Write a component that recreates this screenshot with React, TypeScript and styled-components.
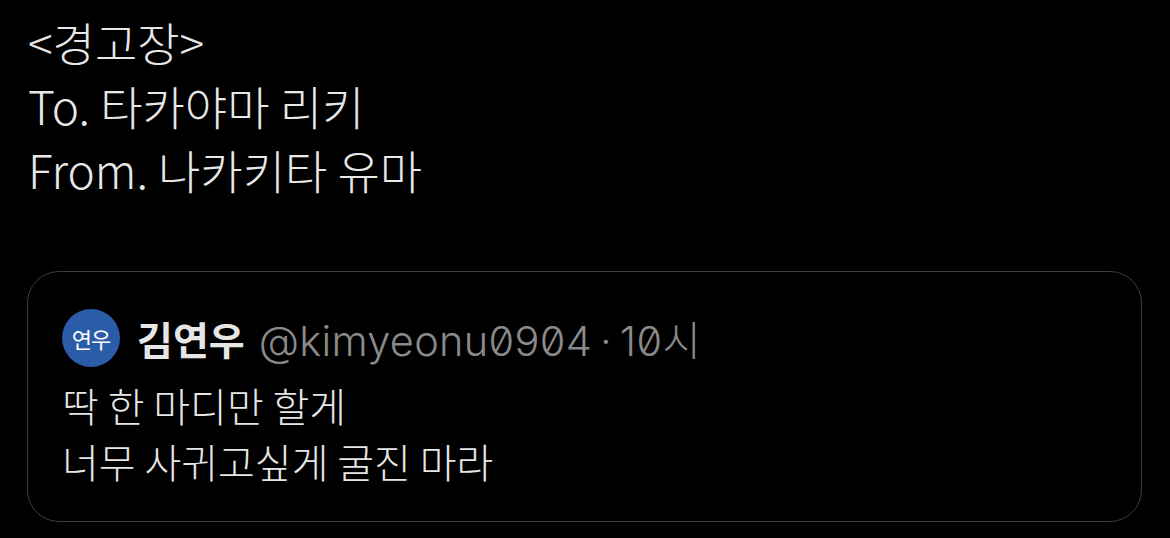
import styled, { createGlobalStyle } from 'styled-components';

const GlobalStyle = createGlobalStyle`
  html, body {
    margin: 0;
    padding: 0;
    background: #000000;
  }
  body {
    font-family: 'Noto Sans CJK KR', 'Noto Sans', sans-serif;
    -webkit-font-smoothing: antialiased;
  }
`;

const App = () => {
  return (
    <Page>
      <GlobalStyle />
      <Letter>
        <Line>&lt;경고장&gt;</Line>
        <Line>To. 타카야마 리키</Line>
        <Line>From. 나카키타 유마</Line>
      </Letter>
      <QuoteCard>
        <Header>
          <Avatar>연우</Avatar>
          <Name>김연우</Name>
          <Meta>@kimyeonu0904{'\u2009·\u2009'}10시</Meta>
        </Header>
        <Body>
          <BodyLine>딱 한 마디만 할게</BodyLine>
          <BodyLine>너무 사귀고싶게 굴진 마라</BodyLine>
        </Body>
      </QuoteCard>
    </Page>
  );
};

const Page = styled.div`
  width: 1170px;
  height: 538px;
  box-sizing: border-box;
  padding: 9px 28px 0 27px;
  background: #000000;
  overflow: hidden;
`;
const Letter = styled.div`
  display: flex;
  flex-direction: column;
  padding-left: 1px;
  margin-bottom: 70px;
`;
const Line = styled.div`
  font-family: 'Noto Sans CJK KR', sans-serif;
  font-size: 46px;
  font-weight: 300;
  line-height: 64px;
  color: #e8e8e8;
`;
const QuoteCard = styled.div`
  width: 1115px;
  height: 251px;
  box-sizing: border-box;
  border: 1px solid #3c3c3c;
  border-radius: 32px;
  padding: 37px 32px 0 34px;
`;
const Header = styled.div`
  display: flex;
  align-items: center;
  height: 58px;
`;
const Avatar = styled.div`
  width: 58px;
  height: 58px;
  border-radius: 50%;
  background: #2a5ca8;
  color: #ffffff;
  display: flex;
  justify-content: center;
  align-items: center;
  font-size: 22px;
  font-weight: 400;
  letter-spacing: -1px;
  margin-right: 17px;
`;
const Name = styled.div`
  font-family: 'Noto Sans CJK KR', sans-serif;
  font-size: 39px;
  font-weight: 700;
  color: #e6e6e6;
  margin-right: 14px;
`;
const Meta = styled.div`
  font-family: Inter, 'Noto Sans CJK KR', sans-serif;
  font-feature-settings: 'zero' 1;
  font-size: 41.5px;
  font-weight: 300;
  color: #8a8a8a;
  letter-spacing: 0.3px;
`;
const Body = styled.div`
  display: flex;
  flex-direction: column;
  margin-top: 10px;
`;
const BodyLine = styled.div`
  font-family: 'Noto Sans CJK KR', sans-serif;
  font-size: 40px;
  font-weight: 300;
  line-height: 56px;
  color: #e6e6e6;
`;

export default App;
